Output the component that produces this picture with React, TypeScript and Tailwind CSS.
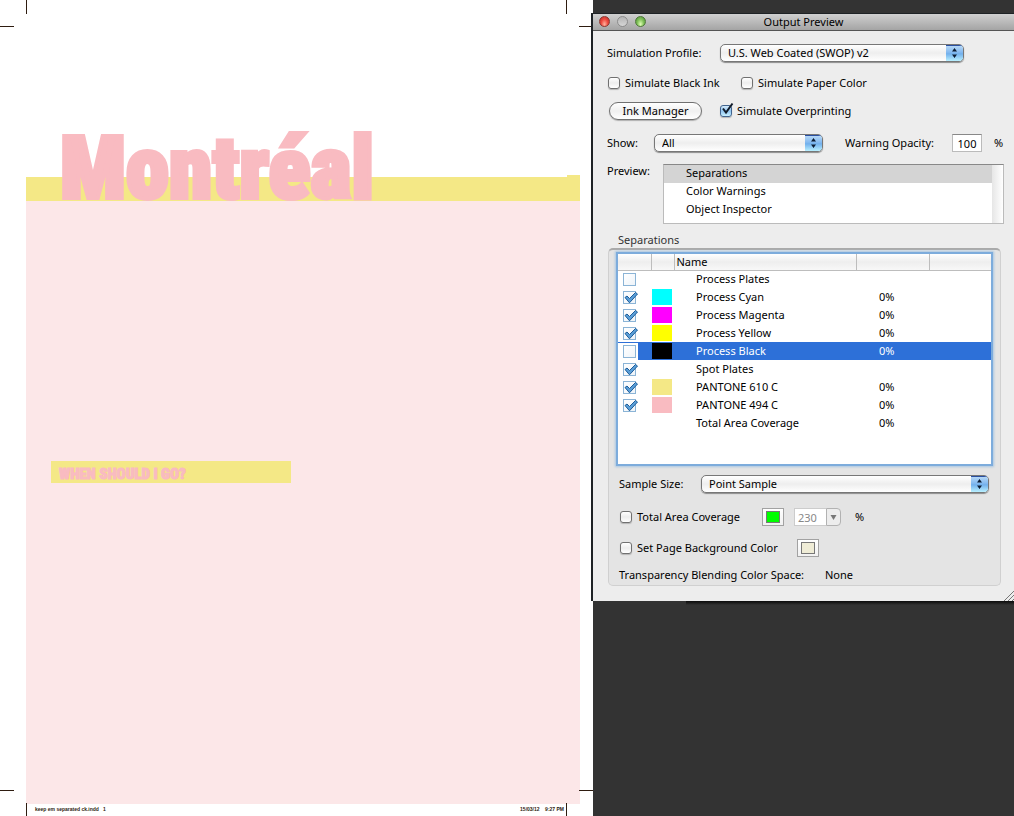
import { useState, type ReactNode } from "react";
import clsx from "clsx";

type Plate = { name: string; color?: string; value?: string; checked?: boolean };

const PLATES: Plate[] = [
  { name: "Process Plates", checked: false },
  { name: "Process Cyan", color: "bg-[#00ffff]", value: "0%", checked: true },
  { name: "Process Magenta", color: "bg-[#ff00ff]", value: "0%", checked: true },
  { name: "Process Yellow", color: "bg-[#ffff00]", value: "0%", checked: true },
  { name: "Process Black", color: "bg-black", value: "0%", checked: false },
  { name: "Spot Plates", checked: true },
  { name: "PANTONE 610 C", color: "bg-[#f4e886]", value: "0%", checked: true },
  { name: "PANTONE 494 C", color: "bg-[#f9bbc1]", value: "0%", checked: true },
  { name: "Total Area Coverage", value: "0%" },
];

const PREVIEWS = ["Separations", "Color Warnings", "Object Inspector"];

function CropMark({ className }: { className: string }) {
  return <span aria-hidden="true" className={clsx("absolute bg-[#2e1c10]", className)} />;
}

function DocumentPage() {
  return (
    <main className="relative flex min-w-0 flex-1 flex-col overflow-hidden bg-white pl-[26px] pr-[13px]">
      <CropMark className="left-[26px] top-0 h-3.5 w-px" />
      <CropMark className="right-[26px] top-0 h-3.5 w-px" />
      <CropMark className="left-0 top-[26px] h-px w-3.5" />
      <CropMark className="right-0 top-[26px] h-px w-3.5" />
      <CropMark className="bottom-[25px] left-0 h-px w-3.5" />
      <CropMark className="bottom-[25px] right-0 h-px w-3.5" />
      <CropMark className="bottom-0 left-[26px] h-[13px] w-px" />
      <CropMark className="bottom-0 right-[26px] h-[13px] w-px" />

      <header className="relative flex h-[201px] flex-col justify-end">
        <div className="flex items-end">
          <div className="h-6 flex-1 bg-[#f4e886]" />
          <div className="h-[26px] w-[13px] bg-[#f4e886]" />
        </div>
        <h1 className="absolute left-[34px] top-[108px] font-['Liberation_Sans_Narrow','Roboto_Condensed','Liberation_Sans',sans-serif] text-[87px] font-black leading-[120px] text-[#f9bbc1] [-webkit-text-stroke:4px_#f9bbc1]">
          Montréal
        </h1>
      </header>
      <section className="flex-1 bg-[#fce7e8] pl-[25px] pt-[260px]">
        <h2 className="h-[22px] w-60 bg-[#f4e886] pl-2 pt-1 font-['Liberation_Sans_Narrow','Roboto_Condensed','Liberation_Sans',sans-serif] text-[15px] font-black leading-[18px] text-[#f9bbc1] [-webkit-text-stroke:1px_#f9bbc1]">
          WHEN SHOULD I GO?
        </h2>
      </section>
      <footer className="flex h-3 items-start justify-between pl-[9px] pr-4 pt-[3px] font-['Liberation_Sans',sans-serif] text-[5px] font-bold leading-none text-[#2e1c10]">
        <span className="whitespace-pre">keep em separated ck.indd   1</span>
        <span className="whitespace-pre">15/03/12    9:27 PM</span>
      </footer>
    </main>
  );
}

function Check({ label, defaultChecked = false }: { label: string; defaultChecked?: boolean }) {
  return (
    <label className="flex items-center gap-1">
      <span className="relative block size-3.5">
        <input
          type="checkbox"
          defaultChecked={defaultChecked}
          className="peer m-px block size-3 appearance-none rounded-[3px] border border-[#707070] bg-linear-to-b from-white via-[#ededed] to-white shadow-[0_1px_1px_#b5b5b5] checked:border-[#41648f] checked:from-[#d5eafa] checked:via-[#8fc4f0] checked:to-[#c8f0ff]"
        />
        <svg
          viewBox="0 0 14 14"
          className="pointer-events-none absolute -top-0.5 left-px hidden size-3.5 peer-checked:block"
        >
          <path d="M3 6.5 L6 10.5 L12.5 1.5" fill="none" stroke="#111c2b" strokeWidth="2" />
        </svg>
      </span>
      <span>{label}</span>
    </label>
  );
}

function PopUp({ id, value, className }: { id: string; value: string; className: string }) {
  return (
    <span
      className={clsx(
        "relative flex h-[18px] overflow-hidden rounded-[5px] border border-[#777] bg-linear-to-b from-white via-[#eeeeee] to-white shadow-[0_1px_1px_#8c8c8c]",
        className,
      )}
    >
      <select id={id} className="w-full appearance-none bg-transparent pl-[7px] pr-5 leading-4 outline-none">
        <option>{value}</option>
      </select>
      <svg viewBox="0 0 17 16" preserveAspectRatio="none" className="pointer-events-none absolute inset-y-0 right-0 h-full w-[17px]">
        <defs>
          <linearGradient id={`${id}-fill`} x1="0" y1="0" x2="0" y2="1">
            <stop offset="0" stopColor="#bcdcf8" />
            <stop offset="0.45" stopColor="#85baf0" />
            <stop offset="0.55" stopColor="#72b0ec" />
            <stop offset="1" stopColor="#b9f0ff" />
          </linearGradient>
        </defs>
        <rect width="17" height="16" fill={`url(#${id}-fill)`} />
        <path d="M0 0.5H17" stroke="#2a4fa0" />
        <path d="M8.5 3 L11 6.5 H6 Z M8.5 13 L11 9.5 H6 Z" fill="#0c1c33" />
      </svg>
    </span>
  );
}

function PlateCheck({ plate }: { plate: Plate }) {
  return (
    <span className="relative ml-[5px] block size-[13px]">
      <input
        type="checkbox"
        aria-label={plate.name}
        defaultChecked={plate.checked}
        className="peer block size-[13px] appearance-none border border-[#8bb4d6] bg-linear-to-br from-white to-[#eef4f9]"
      />
      <svg viewBox="0 0 15 13" className="pointer-events-none absolute left-0 top-0 hidden h-[13px] w-[15px] peer-checked:block">
        <path d="M2 6.5 L4 5 L6.5 7.5 L12.5 1.5 L14.5 3 L6.5 11.8 Z" fill="#5a9fd8" stroke="#1d5c99" strokeWidth="1" />
      </svg>
    </span>
  );
}

function PlatesTable() {
  const [selected, setSelected] = useState("Process Black");
  return (
    <div className="h-[210px] bg-white shadow-[0_0_0_2px_#7dacdc,0_0_2px_3px_#a9c6e2]">
      <table className="w-full table-fixed border-collapse">
        <colgroup>
          <col className="w-[33px]" />
          <col className="w-[23px]" />
          <col />
          <col className="w-[73px]" />
          <col className="w-[62px]" />
        </colgroup>
        <thead>
          <tr className="h-4 bg-linear-to-b from-white via-[#eeeeee] to-[#f8f8f8] text-left leading-[15px]">
            <th className="border-b border-r border-[#bdbdbd] p-0" />
            <th className="border-b border-r border-[#bdbdbd] p-0" />
            <th className="border-b border-r border-[#bdbdbd] p-0 pl-0.5 font-normal">Name</th>
            <th className="border-b border-r border-[#bdbdbd] p-0" />
            <th className="border-b border-[#bdbdbd] p-0" />
          </tr>
        </thead>
        <tbody>
          {PLATES.map((plate) => {
            const active = plate.name === selected;
            return (
              <tr
                key={plate.name}
                onClick={() => setSelected(plate.name)}
                className={clsx("h-[18px] leading-4", active && "bg-[#2d70d8] text-white")}
              >
                <td className="p-0">
                  {plate.checked !== undefined && (
                    <span className={clsx("block w-5 py-0.5", active && "bg-white")}>
                      <PlateCheck plate={plate} />
                    </span>
                  )}
                </td>
                <td className="p-0 pl-px">
                  {plate.color && <span className={clsx("block h-4 w-5", plate.color)} />}
                </td>
                <td className="p-0 pl-[22px]">{plate.name}</td>
                <td className="p-0 pl-[23px]">{plate.value}</td>
                <td className="p-0" />
              </tr>
            );
          })}
        </tbody>
      </table>
    </div>
  );
}

function ColorWell({ label, children }: { label: string; children: ReactNode }) {
  return (
    <button
      type="button"
      aria-label={label}
      className="flex h-[18px] w-[22px] items-center justify-center border border-[#a2a2a2] bg-linear-to-b from-white to-[#f1f1f1]"
    >
      {children}
    </button>
  );
}

function TitleBar() {
  return (
    <div className="relative flex h-[17px] items-center justify-center border-b border-[#555] bg-linear-to-b from-[#d0d0d0] to-[#a4a4a4]">
      <div className="absolute left-1.5 top-0.5 flex gap-[7px]">
        <button type="button" aria-label="Close" className="size-[11px] rounded-full border border-[#8d3830] bg-radial-[at_50%_80%] from-[#ffb19c] via-[#ee4b40] to-[#b32a24]" />
        <button type="button" aria-label="Minimize" className="size-[11px] rounded-full border border-[#8c8c8c] bg-linear-to-b from-[#b5b5b5] to-[#d6d6d6]" />
        <button type="button" aria-label="Zoom" className="size-[11px] rounded-full border border-[#4e7838] bg-radial-[at_50%_80%] from-[#e0ffb5] via-[#82c25a] to-[#4a8a38]" />
      </div>
      <h2 className="leading-4">Output Preview</h2>
    </div>
  );
}

function OutputPreview() {
  const [preview, setPreview] = useState(PREVIEWS[0]);
  return (
    <div className="relative -ml-0.5 mt-[13px] border-l-2 border-t border-[#1e2225] bg-[#ededed]">
      <TitleBar />
      <div className="flex flex-col pb-[15px] pl-3.5 pr-2.5 pt-2">
        <div className="flex h-7 items-center">
          <label htmlFor="profile" className="w-[113px]">Simulation Profile:</label>
          <PopUp id="profile" value="U.S. Web Coated (SWOP) v2" className="w-[244px]" />
        </div>
        <div className="flex h-8 items-center">
          <div className="w-[133px]">
            <Check label="Simulate Black Ink" />
          </div>
          <Check label="Simulate Paper Color" />
        </div>
        <div className="flex h-6 items-center pl-0.5">
          <div className="w-[110px]">
            <button
              type="button"
              className="block h-[18px] w-[93px] rounded-full border border-[#707070] bg-linear-to-b from-white via-[#f0f0f0] to-white leading-4 shadow-[0_1px_1px_#b0b0b0]"
            >
              Ink Manager
            </button>
          </div>
          <Check label="Simulate Overprinting" defaultChecked />
        </div>
        <div className="flex h-10 items-center">
          <label htmlFor="show" className="w-[47px]">Show:</label>
          <PopUp id="show" value="All" className="w-[169px]" />
          <label htmlFor="opacity" className="w-[129px] pl-[22px]">Warning Opacity:</label>
          <input
            id="opacity"
            defaultValue="100"
            className="h-[18px] w-[30px] border border-[#bbb] border-t-[#888] bg-white text-center outline-none"
          />
          <span className="pl-3">%</span>
        </div>
        <div className="flex pt-px">
          <span id="preview-label" className="w-14 leading-[14px]">Preview:</span>
          <div className="flex h-[60px] flex-1 border border-[#bbb] border-t-[#888] bg-white">
            <ul role="listbox" aria-labelledby="preview-label" className="flex-1">
              {PREVIEWS.map((name) => (
                <li
                  key={name}
                  role="option"
                  aria-selected={name === preview}
                  onClick={() => setPreview(name)}
                  className={clsx("h-[18px] pl-[22px] leading-4", name === preview && "bg-[#d4d4d4]")}
                >
                  {name}
                </li>
              ))}
            </ul>
            <div className="w-[11px] bg-linear-to-r from-[#e6e6e6] to-white" />
          </div>
        </div>
        <h3 className="pl-[11px] pt-2 leading-4 text-[#333]">Separations</h3>
        <section className="mr-[3px] ml-px rounded-[5px] border border-[#d0d0d0] border-t-[#aaa] border-t-2 bg-[#e4e4e4] px-[9px] pt-1">
          <PlatesTable />
          <div className="flex flex-col pl-px pt-1.5">
            <div className="flex h-7 items-center">
              <label htmlFor="sample" className="w-[82px]">Sample Size:</label>
              <PopUp id="sample" value="Point Sample" className="mr-0.5 flex-1" />
            </div>
            <div className="flex h-[38px] items-center">
              <div className="w-[143px]">
                <Check label="Total Area Coverage" />
              </div>
              <ColorWell label="Coverage highlight color">
                <span className="h-3 w-3.5 border border-[#777] bg-[#00ff00]" />
              </ColorWell>
              <input
                aria-label="Coverage limit"
                disabled
                defaultValue="230"
                className="ml-2.5 h-[18px] w-8 border border-r-0 border-[#ccc] bg-white pl-[3px] text-[#888]"
              />
              <button
                type="button"
                aria-label="Choose limit"
                disabled
                className="flex h-[18px] w-[15px] items-center justify-center rounded-r-[4px] border border-[#b2b2b2] bg-[#ededed]"
              >
                <svg viewBox="0 0 7 5" className="h-[5px] w-[7px]">
                  <path d="M0.5 0H6.5L3.5 5Z" fill="#777" />
                </svg>
              </button>
              <span className="pl-3.5">%</span>
            </div>
            <div className="flex h-6 items-center">
              <div className="w-[178px]">
                <Check label="Set Page Background Color" />
              </div>
              <ColorWell label="Page background color">
                <span className="h-3 w-3.5 border border-[#777] bg-[#efecd6]" />
              </ColorWell>
            </div>
            <div className="flex h-[25px] items-end pb-0.5">
              <span className="w-[206px]">Transparency Blending Color Space:</span>
              <span>None</span>
            </div>
          </div>
        </section>
      </div>
      <svg viewBox="0 0 10 10" className="absolute bottom-0 right-0 size-2.5">
        <path d="M0 10L10 0M4 10L10 4M8 10L10 8" stroke="#777" strokeWidth="1" />
      </svg>
    </div>
  );
}

export default function App() {
  return (
    <div className="flex min-h-screen bg-[#333333]">
      <DocumentPage />
      <aside className="w-[421px] shrink-0 font-['Noto_Sans',sans-serif] text-[11px] leading-4 text-black">
        <OutputPreview />
        <div className="ml-[93px] h-1 bg-linear-to-b from-[#0c0c0c] to-[#333333]" />
      </aside>
    </div>
  );
}
